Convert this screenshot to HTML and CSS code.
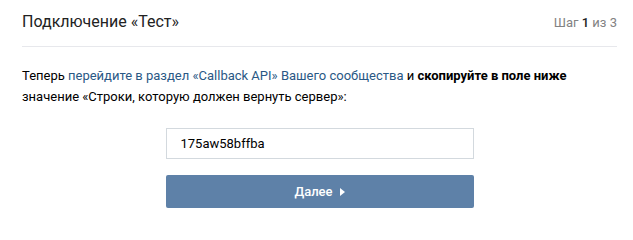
FILE: index.html
```html
<!DOCTYPE html>
<html lang="ru">
<head>
<meta charset="utf-8">
<link rel="stylesheet" href="styles.css">
</head>
<body>
<div class="page">
  <div class="header">
    <div class="title">Подключение «Тест»</div>
    <div class="step">Шаг <b>1</b> из 3</div>
  </div>
  <p class="desc">Теперь <a href="#">перейдите в раздел «Callback API» Вашего сообщества</a> и <b>скопируйте в поле ниже</b><br>значение «Строки, которую должен вернуть сервер»:</p>
  <div class="form">
    <input class="field" type="text" value="175aw58bffba">
    <button class="btn">Далее <svg class="arrow" width="5" height="8" viewBox="0 0 5 8"><path d="M0 0 L5 4 L0 8 Z" fill="#fff"/></svg></button>
  </div>
</div>
</body>
</html>
```
FILE: styles.css
```css
html, body {
  margin: 0;
  padding: 0;
  background: #fff;
}
body {
  font-family: Roboto, "Open Sans", Arial, sans-serif;
  color: #000;
}
.page {
  padding: 0 16px 0 22px;
}
.header {
  display: flex;
  justify-content: space-between;
  align-items: flex-end;
  height: 47px;
  border-bottom: 1px solid #e7e8ec;
  box-sizing: border-box;
  padding-bottom: 14px;
}
.title {
  font-size: 16px;
  color: #222;
  line-height: 20px;
}
.step {
  font-size: 13px;
  color: #828282;
  line-height: 18px;
}
.step b {
  color: #222;
  font-weight: 500;
}
.desc {
  margin: 18px 0 0;
  font-size: 13px;
  line-height: 21px;
  color: #000;
}
.desc a {
  color: #2a5885;
  text-decoration: none;
}
.desc b {
  font-weight: 700;
}
.form {
  width: 308px;
  margin: 21px auto 0;
  display: flex;
  flex-direction: column;
  gap: 16px;
}
.field {
  box-sizing: border-box;
  width: 100%;
  height: 31px;
  border: 1px solid #d3d9de;
  border-radius: 0;
  padding: 0 14px;
  font-family: inherit;
  font-size: 13px;
  color: #000;
  outline: none;
}
.btn {
  width: 100%;
  height: 33px;
  border: 0;
  border-radius: 2px;
  background: #5e81a8;
  color: #fff;
  font-family: inherit;
  font-size: 13px;
  font-weight: 500;
  display: flex;
  align-items: center;
  justify-content: center;
  gap: 7px;
  padding: 0;
}
.arrow {
  display: block;
}
```
